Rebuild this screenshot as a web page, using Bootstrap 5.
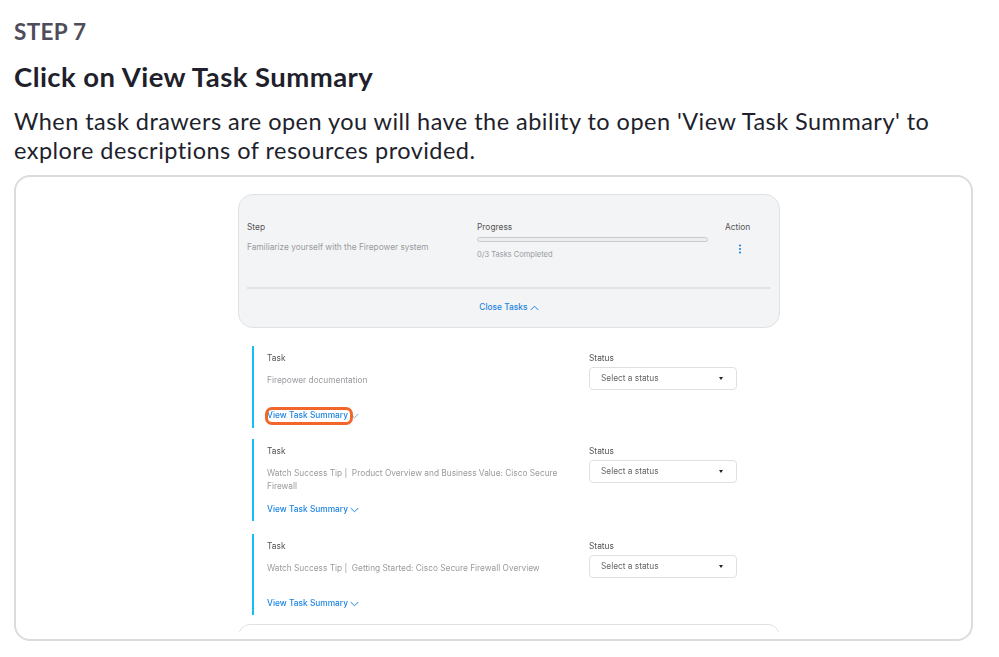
<!DOCTYPE html>
<html lang="en"><head><meta charset="utf-8"><title>Step 7</title>
<link href="https://cdn.jsdelivr.net/npm/bootstrap@5.3.0/dist/css/bootstrap.min.css" rel="stylesheet">
<style>
html,body{height:657px;overflow:hidden;background:#fff}
body{font-family:"Lato","Liberation Sans",sans-serif;color:#211f2c}
.page-wrap{padding:18px 26px 0 14px}
.step-no{font-size:22.5px;line-height:28px;font-weight:700;color:#4f4d5a;letter-spacing:.3px;margin-bottom:14px}
.step-title{font-size:27.5px;line-height:34px;font-weight:700;color:#211f2c;letter-spacing:.45px;margin-bottom:13px}
.step-text{font-size:23.5px;line-height:29px;letter-spacing:.47px;margin-bottom:10px;color:#211f2c}
.frame{height:466px;border:2px solid #dcdcdc;border-radius:16px;overflow:hidden;padding-top:17px}
.shot{width:542px;height:438px;margin-left:222px;overflow:hidden;font-family:"Inter","Liberation Sans",sans-serif;font-size:8.3px;color:#555;filter:blur(.35px)}
.summary-panel{height:134px;background:#f3f4f6;border:1.5px solid #e0e1e4;border-radius:15px;padding:26px 8px 0 8px}
.sum-row{height:66px}
.c-step{width:230px}.c-prog{width:248px}
.lbl{font-size:8.4px;line-height:12px;color:#555}
.mut{color:#9a9a9f;line-height:13px}
.mini{font-size:7.5px}
.bar-track{width:231px;height:5px;border:1px solid #c9cacd;border-radius:3px;background:#eceded;margin:4px 0 6px}
.kebab{width:14px;margin:11px 0 0 8px}
.rule{height:2px;background:#e2e3e5;margin-bottom:12px}
.blue-link{color:#1e84e0;font-weight:500;font-size:8.35px;line-height:13px;text-decoration:none}
.task-item{border-left:2px solid #13c0f5;margin-left:13.5px;padding:6px 0 0 13.5px;position:relative}
.t1{height:82px;margin-bottom:11px}.t2{height:82px;margin-bottom:13px}.t3{height:81px;margin-bottom:9px}
.c-task{width:322px}.c-stat{width:148px}
.desc{margin-top:10px;line-height:13px;height:27px;width:300px}
.stat-select{height:23px;border:1.5px solid #dfe0e2;border-radius:4px;margin-top:3px;padding:0 13px 0 11px;color:#666}
.caret-mini{width:0;height:0;border-left:2.5px solid transparent;border-right:2.5px solid transparent;border-top:3px solid #222}
.lower{position:absolute;left:13.5px;bottom:5px}
.t1 .lower{bottom:6px}
.hilite{position:absolute;left:-2px;top:-2px;width:88px;height:18px;border:3px solid #f2662a;border-radius:7px}
.bottom-peek{height:24px;border:1.5px solid #e0e1e4;border-radius:15px}
</style></head>
<body>
<main class="page-wrap">
  <div class="step-no">STEP 7</div>
  <h1 class="step-title">Click on View Task Summary</h1>
  <p class="step-text">When task drawers are open you will have the ability to open 'View Task Summary' to explore descriptions of resources provided.</p>
  <div class="frame">
    <div class="shot">
      <section class="summary-panel">
        <div class="d-flex sum-row">
          <div class="c-step"><div class="lbl">Step</div><div class="mut mt-2">Familiarize yourself with the Firepower system</div></div>
          <div class="c-prog"><div class="lbl">Progress</div><div class="bar-track"></div><div class="mut mini">0/3 Tasks Completed</div></div>
          <div><div class="lbl">Action</div>
            <svg class="kebab d-block" height="11" viewBox="0 0 14 11"><circle cx="7" cy="1.5" r="1.1" fill="#1e84e0"/><circle cx="7" cy="5" r="1.1" fill="#1e84e0"/><circle cx="7" cy="8.5" r="1.1" fill="#1e84e0"/></svg>
          </div>
        </div>
        <div class="rule"></div>
        <div class="text-center"><a class="blue-link" href="#">Close Tasks <svg width="9" height="6" viewBox="0 0 9 6" fill="none"><path d="M.7 5 4.5 1.2 8.3 5" stroke="#1e84e0"/></svg></a></div>
      </section>
      <div style="height:18px"></div>

      <div class="task-item t1 d-flex">
        <div class="c-task"><div class="lbl">Task</div><div class="desc mut">Firepower documentation</div></div>
        <div class="c-stat"><div class="lbl">Status</div><div class="stat-select d-flex align-items-center justify-content-between"><span>Select a status</span><span class="caret-mini"></span></div></div>
        <div class="lower"><a class="blue-link" href="#">View Task Summary</a> <svg width="9" height="6" viewBox="0 0 9 6" fill="none"><path d="M.7 1 4.5 4.8 8.3 1" stroke="#7fa8cc"/></svg><span class="hilite"></span></div>
      </div>
      <div class="task-item t2 d-flex">
        <div class="c-task"><div class="lbl">Task</div><div class="desc mut">Watch Success Tip |&nbsp; Product Overview and Business Value: Cisco Secure Firewall</div></div>
        <div class="c-stat"><div class="lbl">Status</div><div class="stat-select d-flex align-items-center justify-content-between"><span>Select a status</span><span class="caret-mini"></span></div></div>
        <div class="lower"><a class="blue-link" href="#">View Task Summary</a> <svg width="9" height="6" viewBox="0 0 9 6" fill="none"><path d="M.7 1 4.5 4.8 8.3 1" stroke="#1e84e0"/></svg></div>
      </div>
      <div class="task-item t3 d-flex">
        <div class="c-task"><div class="lbl">Task</div><div class="desc mut">Watch Success Tip |&nbsp; Getting Started: Cisco Secure Firewall Overview</div></div>
        <div class="c-stat"><div class="lbl">Status</div><div class="stat-select d-flex align-items-center justify-content-between"><span>Select a status</span><span class="caret-mini"></span></div></div>
        <div class="lower"><a class="blue-link" href="#">View Task Summary</a> <svg width="9" height="6" viewBox="0 0 9 6" fill="none"><path d="M.7 1 4.5 4.8 8.3 1" stroke="#1e84e0"/></svg></div>
      </div>
      <div class="bottom-peek"></div>
    </div>
  </div>
</main>
<script src="https://cdn.jsdelivr.net/npm/bootstrap@5.3.0/dist/js/bootstrap.bundle.min.js"></script>
</body></html>
